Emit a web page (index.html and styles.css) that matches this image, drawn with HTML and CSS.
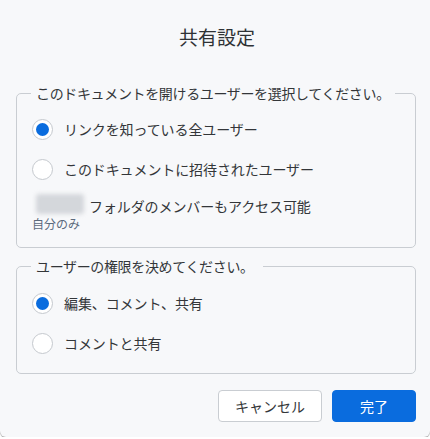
FILE: index.html
```html
<!DOCTYPE html>
<html lang="ja">
<head>
<meta charset="utf-8">
<title>共有設定</title>
<link rel="stylesheet" href="styles.css">
</head>
<body>
<div class="dialog">
  <h1 class="title">共有設定</h1>
  <fieldset class="group group-access">
    <legend class="legend">このドキュメントを開けるユーザーを選択してください。</legend>
    <label class="option">
      <span class="radio checked"></span>
      <span class="label">リンクを知っている全ユーザー</span>
    </label>
    <label class="option">
      <span class="radio"></span>
      <span class="label">このドキュメントに招待されたユーザー</span>
    </label>
    <div class="folder">
      <span class="blur"></span>
      <span class="label">フォルダのメンバーもアクセス可能</span>
    </div>
    <div class="note">自分のみ</div>
  </fieldset>
  <fieldset class="group group-perm">
    <legend class="legend">ユーザーの権限を決めてください。</legend>
    <label class="option">
      <span class="radio checked"></span>
      <span class="label">編集、コメント、共有</span>
    </label>
    <label class="option">
      <span class="radio"></span>
      <span class="label">コメントと共有</span>
    </label>
  </fieldset>
  <div class="actions">
    <button class="btn btn-cancel">キャンセル</button>
    <button class="btn btn-ok">完了</button>
  </div>
</div>
</body>
</html>
```

FILE: styles.css
```css
html, body {
  margin: 0;
  padding: 0;
  background: #ffffff;
}
body {
  font-family: "Noto Sans CJK JP", "Noto Sans", sans-serif;
  color: #333639;
}
.dialog {
  width: 430px;
  height: 437px;
  box-sizing: border-box;
  background: #f7f8fa;
  border-radius: 0 0 6px 6px;
  box-shadow: 0 1px 1px rgba(0, 0, 0, 0.35);
  padding: 24px 14px 0 16px;
  display: flex;
  flex-direction: column;
}
.title {
  margin: 0 0 33px 0;
  font-size: 19px;
  font-weight: 400;
  line-height: 26px;
  text-align: center;
  color: #2f3235;
  padding-left: 2px;
}
.group {
  margin: 0;
  border: 1px solid #c9cdd2;
  border-radius: 5px;
  padding: 6px 0 0 15px;
  min-width: 0;
}
.group-access {
  padding-bottom: 15px;
}
.group-perm {
  margin-top: 8px;
  padding-top: 7px;
  padding-bottom: 10px;
}
.legend {
  margin-left: -1px;
  padding: 0 5px;
  font-size: 14px;
  line-height: 20px;
  letter-spacing: -0.35px;
  color: #333639;
}
.group-perm .legend {
  padding-right: 9px;
}
.option {
  display: flex;
  align-items: center;
  height: 40px;
  gap: 11px;
}
.radio {
  width: 19px;
  height: 19px;
  border: 1px solid #c5c9ce;
  border-radius: 50%;
  background: #ffffff;
  box-sizing: content-box;
  position: relative;
  flex: none;
}
.radio.checked::after {
  content: "";
  position: absolute;
  left: 3px;
  top: 3px;
  width: 13px;
  height: 13px;
  border-radius: 50%;
  background: #0a6cde;
}
.label {
  font-size: 14px;
  line-height: 20px;
  letter-spacing: -0.1px;
  color: #333639;
}
.folder {
  margin-top: 4px;
  display: flex;
  align-items: center;
  height: 22px;
  padding-left: 4px;
  gap: 5px;
}
.folder .label {
  position: relative;
  top: 2px;
}
.blur {
  width: 48px;
  height: 20px;
  background: #d4d7db;
  border-radius: 3px;
  filter: blur(2px);
}
.note {
  margin-top: 1px;
  font-size: 12px;
  line-height: 16px;
  color: #5b6a7d;
}
.actions {
  margin-top: 16px;
  display: flex;
  justify-content: flex-end;
  gap: 10px;
}
.btn {
  height: 32px;
  font-family: inherit;
  font-size: 14px;
  border-radius: 4px;
  cursor: pointer;
  padding: 0;
}
.btn-cancel {
  width: 104px;
  background: #ffffff;
  border: 1px solid #c9cdd2;
  color: #333639;
}
.btn-ok {
  width: 84px;
  background: #0a6cde;
  border: 1px solid #0a6cde;
  color: #ffffff;
}
```
